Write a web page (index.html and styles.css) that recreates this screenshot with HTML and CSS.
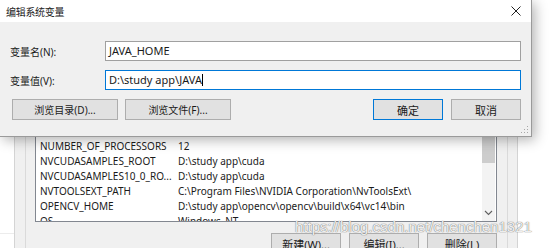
FILE: index.html
```html
<!DOCTYPE html>
<html>
<head>
<meta charset="utf-8">
<link rel="stylesheet" href="styles.css">
</head>
<body>
<div class="desk">
  <div class="parent">
    <div class="strip-left"><div class="strip-line"></div></div>
    <div class="panel">
      <div class="inner">
        <div class="listbox">
          <div class="rows">
            <div class="row"><span class="c1">NUMBER_OF_PROCESSORS</span><span class="c2">12</span></div>
            <div class="row"><span class="c1">NVCUDASAMPLES_ROOT</span><span class="c2">D:\study app\cuda</span></div>
            <div class="row"><span class="c1">NVCUDASAMPLES10_0_RO...</span><span class="c2">D:\study app\cuda</span></div>
            <div class="row"><span class="c1">NVTOOLSEXT_PATH</span><span class="c2">C:\Program Files\NVIDIA Corporation\NvToolsExt\</span></div>
            <div class="row"><span class="c1">OPENCV_HOME</span><span class="c2">D:\study app\opencv\opencv\build\x64\vc14\bin</span></div>
            <div class="row"><span class="c1">OS</span><span class="c2">Windows_NT</span></div>
          </div>
          <div class="scrollbar">
            <div class="thumb"></div>
            <div class="track"></div>
            <svg class="arrow" width="9" height="6" viewBox="0 0 9 6"><path d="M1 1 L4.5 4.5 L8 1" fill="none" stroke="#606060" stroke-width="1.1"/></svg>
          </div>
        </div>
        <div class="btnrow">
          <div class="btn small">新建(W)...</div>
          <div class="btn small">编辑(I)...</div>
          <div class="btn small">删除(L)</div>
        </div>
      </div>
    </div>
    <div class="strip-right"></div>
  </div>

  <div class="dialog">
    <div class="titlebar">
      <span class="title">编辑系统变量</span>
      <svg class="close" width="10" height="10" viewBox="0 0 10 10"><path d="M0.5 0.5 L9.5 9.5 M9.5 0.5 L0.5 9.5" stroke="#222" stroke-width="1"/></svg>
    </div>
    <div class="dbody">
      <div class="field">
        <span class="label">变量名(N):</span>
        <div class="input">JAVA_HOME</div>
      </div>
      <div class="field">
        <span class="label">变量值(V):</span>
        <div class="input focus">D:\study app\JAVA<span class="caret"></span></div>
      </div>
      <div class="actions">
        <div class="btn browse">浏览目录(D)...</div>
        <div class="btn browse">浏览文件(F)...</div>
        <div class="spacer"></div>
        <div class="btn ok">确定</div>
        <div class="btn">取消</div>
      </div>
      <svg class="grip" width="8" height="8" viewBox="0 0 8 8"><g fill="#a8a8a8"><rect x="6" y="0" width="1" height="1"/><rect x="3" y="3" width="1" height="1"/><rect x="6" y="3" width="1" height="1"/><rect x="0" y="6" width="1" height="1"/><rect x="3" y="6" width="1" height="1"/><rect x="6" y="6" width="1" height="1"/></g></svg>
    </div>
  </div>

  <div class="watermark">https://blog.csdn.net/chenchen1321</div>
</div>
</body>
</html>
```
FILE: styles.css
```css
html, body {
  margin: 0;
  padding: 0;
  background: #fff;
}
body {
  font-family: "Noto Sans", "Noto Sans CJK SC", sans-serif;
  font-size: 11px;
  color: #1a1a1a;
}
.desk {
  position: relative;
  width: 554px;
  height: 248px;
  overflow: hidden;
}
.parent {
  display: flex;
  height: 248px;
}
.strip-left {
  box-sizing: border-box;
  width: 15px;
  background: #fff;
  border-right: 1px solid #d4d4d4;
  padding-top: 233px;
}
.strip-line {
  height: 1px;
  background: #ececec;
}
.panel {
  box-sizing: border-box;
  width: 503px;
  flex: none;
  background: #f0f0f0;
  padding: 0 9px 0 10px;
  border-right: 1px solid #d4d4d4;
}
.inner {
  box-sizing: border-box;
  height: 100%;
  border-left: 1px solid #dadada;
  border-right: 1px solid #dadada;
  padding: 124px 10px 0 9px;
}
.listbox {
  box-sizing: border-box;
  height: 98px;
  border: 1px solid #828790;
  background: #fff;
  display: flex;
  overflow: hidden;
}
.rows {
  flex: 1;
  padding-top: 14px;
  font-size: 10px;
}
.row {
  display: flex;
  height: 15px;
  line-height: 15px;
  padding-left: 4px;
  white-space: nowrap;
}
.c1 {
  width: 138px;
  flex: none;
}
.scrollbar {
  width: 13px;
  margin-right: 1px;
  display: flex;
  flex-direction: column;
  background: #f3f3f3;
  position: relative;
}
.thumb {
  height: 38px;
  background: #cdcdcd;
}
.track {
  flex: 1;
}
.arrow {
  position: absolute;
  left: 2px;
  bottom: 5px;
}
.btnrow {
  display: flex;
  justify-content: flex-end;
  gap: 8px;
  margin-top: 11px;
}
.btn {
  box-sizing: border-box;
  height: 21px;
  background: #e1e1e1;
  border: 1px solid #adadad;
  display: flex;
  align-items: center;
  justify-content: center;
  font-size: 11px;
  color: #1a1a1a;
}
.btn.small {
  width: 70px;
}
.strip-right {
  flex: 1;
  background: #fff;
}
.dialog {
  position: absolute;
  left: 0;
  top: 0;
  width: 531px;
  height: 136px;
  background: #f0f0f0;
  border-right: 1px solid #9a9a9a;
  border-bottom: 1px solid #9a9a9a;
  box-shadow: 3px 3px 12px rgba(0,0,0,0.3);
  display: flex;
  flex-direction: column;
}
.titlebar {
  height: 22px;
  background: #fff;
  display: flex;
  align-items: center;
  padding: 0 10px 0 6px;
}
.title {
  flex: 1;
  font-size: 10px;
  color: #222;
  letter-spacing: -0.3px;
}
.dbody {
  position: relative;
  flex: 1;
  padding: 19px 10px 0 12px;
}
.field {
  display: flex;
  align-items: center;
  height: 20px;
  margin-bottom: 9px;
}
.label {
  width: 95px;
  margin-left: -2px;
  font-size: 10px;
}
.input {
  flex: 1;
  box-sizing: border-box;
  height: 20px;
  background: #fff;
  border: 1px solid #a0a0a0;
  padding-left: 3px;
  line-height: 18px;
}
.input.focus {
  border-color: #0078d7;
}
.caret {
  display: inline-block;
  width: 1px;
  height: 12px;
  background: #000;
  vertical-align: -2px;
}
.actions {
  display: flex;
  gap: 7px;
  margin-top: 4px;
}
.spacer {
  flex: 1;
}
.actions .btn {
  width: 70px;
}
.actions .btn.browse {
  width: 106px;
  font-size: 10px;
}
.btn.ok {
  border-color: #0078d7;
  margin-right: 1px;
}
.grip {
  position: absolute;
  right: 2px;
  bottom: 2px;
}
.watermark {
  position: absolute;
  left: 295px;
  top: 218px;
  font-family: "Liberation Sans", sans-serif;
  font-size: 15px;
  color: rgba(255,255,255,0.9);
  text-shadow: 0 0 1px #7a7a7a, 0 0 1px #7a7a7a;
  white-space: nowrap;
}
```
